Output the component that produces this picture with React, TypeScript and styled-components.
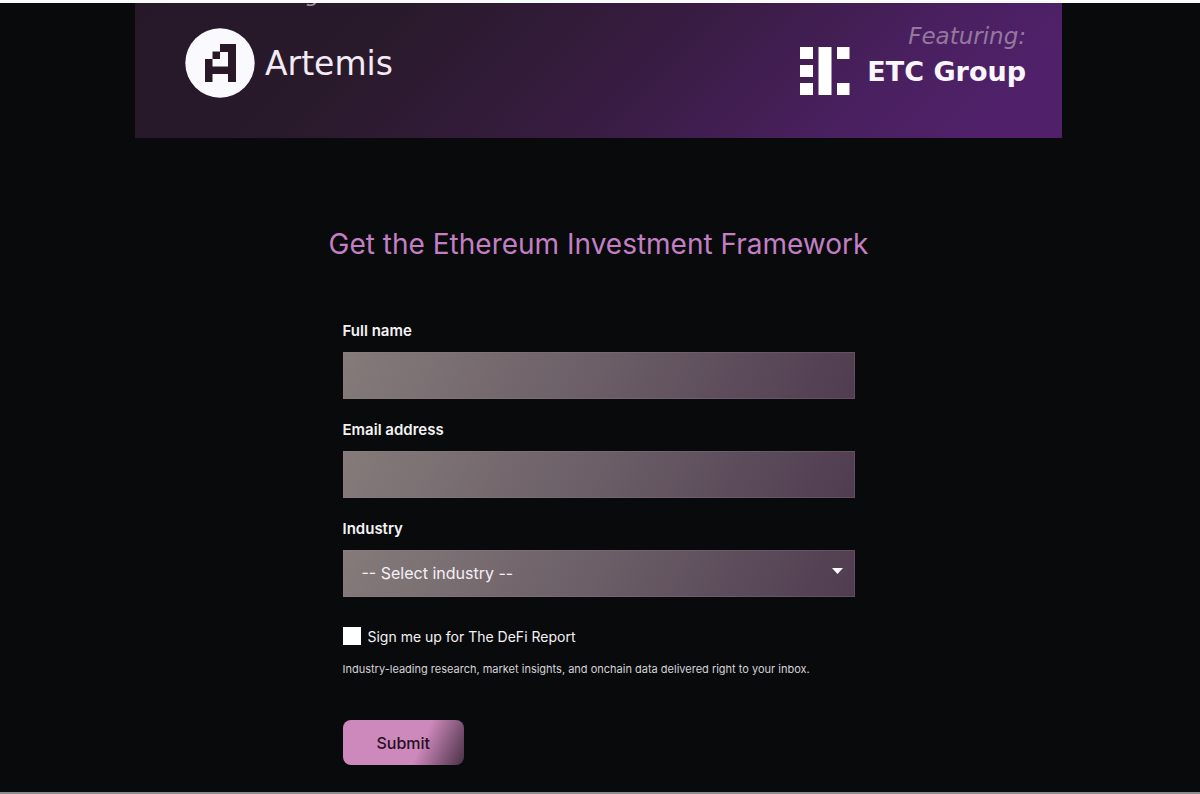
import React from "react";
import styled, { createGlobalStyle } from "styled-components";

const GlobalStyle = createGlobalStyle`
  *, *::before, *::after { box-sizing: border-box; }
  body {
    margin: 0;
    background: #090a0c;
    color: #f4f2f5;
    font-family: Inter, "Liberation Sans", sans-serif;
  }
`;

const Page = styled.div`
  display: flex;
  flex-direction: column;
  min-height: 100vh;
  border-top: 3px solid #f8fbfa;
  border-bottom: 2px solid #8c8c8c;
`;

const Main = styled.main`
  display: flex;
  flex-direction: column;
  align-items: center;
  padding: 0 3px 27px 0;
`;

const Banner = styled.section`
  display: flex;
  flex-direction: column;
  width: 100%;
  max-width: 927px;
  min-height: 135px;
  background: linear-gradient(135deg, #271829 0%, #291a2b 26%, #381c42 54%, #4a2060 78%, #50216a 92%);
`;

const BannerTitle = styled.div`
  display: flex;
  align-items: flex-end;
  height: 3px;
  padding-left: 171px;
  overflow: hidden;
  color: #a394a6;
  font: italic 22px/22px "DejaVu Sans", sans-serif;
`;

const Partners = styled.div`
  display: flex;
  justify-content: space-between;
  align-items: flex-start;
  padding: 14px 36px 0 50px;
`;

const Brand = styled.div`
  display: flex;
  align-items: center;
  gap: 10px;
  padding-top: 8px;
  color: #f3eaf5;
  font: 33px/40px "DejaVu Sans", sans-serif;
`;

const BrandName = styled.span`
  padding-top: 2px;
`;

const Featured = styled.div`
  display: flex;
  align-items: flex-end;
  gap: 17px;
  padding-bottom: 8px;
`;

const FeaturedText = styled.div`
  display: flex;
  flex-direction: column;
  align-items: flex-end;
  padding-bottom: 4px;
`;

const Featuring = styled.span`
  color: #95789f;
  font: italic 23px/32px "DejaVu Sans", sans-serif;
`;

const GroupName = styled.span`
  color: #fbf6fc;
  font: bold 27px/40px "DejaVu Sans", sans-serif;
`;

const Title = styled.h1`
  margin: 86px 0 0;
  color: #c27fc4;
  font-size: 28px;
  font-weight: 400;
  line-height: 40px;
  text-align: center;
`;

const Form = styled.form`
  display: flex;
  flex-direction: column;
  width: 100%;
  max-width: 512px;
  margin-top: 57px;
`;

const Field = styled.div`
  display: flex;
  flex-direction: column;
  gap: 11px;
  margin-bottom: 21px;
`;

const Label = styled.label`
  font-size: 15px;
  font-weight: 600;
  line-height: 20px;
`;

const fieldSurface = `
  width: 100%;
  height: 47px;
  margin: 0;
  padding: 0 18px;
  border: 1px solid rgba(150, 130, 145, 0.25);
  border-radius: 0;
  background: linear-gradient(115deg, #857b7a 0%, #6b5e67 50%, #4f3c50 100%) border-box;
  color: #f5f0f4;
  font: 16px/20px Inter, "Liberation Sans", sans-serif;
`;

const Input = styled.input`
  ${fieldSurface}
`;

const SelectBox = styled.div`
  position: relative;
`;

const Select = styled.select`
  ${fieldSurface}
  display: block;
  padding-bottom: 2px;
  appearance: none;
`;

const Arrow = styled.svg`
  position: absolute;
  top: 18px;
  right: 12px;
  pointer-events: none;
`;

const CheckRow = styled.div`
  display: flex;
  gap: 7px;
  margin-top: 9px;
`;

const Checkbox = styled.input`
  width: 18px;
  height: 18px;
  margin: 0;
  appearance: none;
  background: #fff;
  &:checked { background: #cf8cbd; }
`;

const CheckLabel = styled.label`
  font-size: 14px;
  line-height: 20px;
`;

const Hint = styled.p`
  margin: 14px 0 0;
  color: #d5d3d7;
  font-size: 11px;
  line-height: 16px;
`;

const Submit = styled.button`
  align-self: flex-start;
  height: 45px;
  margin-top: 43px;
  padding: 0 34px;
  border: 0;
  border-radius: 8px;
  background: linear-gradient(115deg, #cd89bb 0%, #cd89bb 63%, #4a3046 100%);
  color: #25101f;
  font: 500 16px/20px Inter, "Liberation Sans", sans-serif;
`;

function ArtemisLogo() {
  return (
    <svg width="70" height="70" viewBox="0 0 70 70" aria-hidden="true">
      <circle cx="35" cy="35" r="34.7" fill="#fafafe" />
      <path
        fill="#281828"
        d="M35 16h16v38h-8v-8H27.500v8H20V31h7.500v7.500H43V24h-8zM27.500 23.500H35V31h-7.500z"
      />
    </svg>
  );
}

function EtcLogo() {
  return (
    <svg width="50" height="50" viewBox="0 0 50 50" aria-hidden="true">
      <path
        fill="#fff"
        d="M0 1h13v12H0zM0 19h13v12H0zM0 37h13v12H0zM18.500 1h13v48h-13zM37 1h12.500v12H37zM37 37h12.500v12H37z"
      />
    </svg>
  );
}

export default function App() {
  return (
    <>
      <GlobalStyle />
      <Page>
        <Main>
          <Banner>
            <BannerTitle aria-hidden="true">g</BannerTitle>
            <Partners>
              <Brand>
                <ArtemisLogo />
                <BrandName>Artemis</BrandName>
              </Brand>
              <Featured>
                <EtcLogo />
                <FeaturedText>
                  <Featuring>Featuring:</Featuring>
                  <GroupName>ETC Group</GroupName>
                </FeaturedText>
              </Featured>
            </Partners>
          </Banner>
          <Title>Get the Ethereum Investment Framework</Title>
          <Form onSubmit={(e: React.FormEvent) => e.preventDefault()}>
            <Field>
              <Label htmlFor="name">Full name</Label>
              <Input id="name" type="text" />
            </Field>
            <Field>
              <Label htmlFor="email">Email address</Label>
              <Input id="email" type="email" />
            </Field>
            <Field>
              <Label htmlFor="industry">Industry</Label>
              <SelectBox>
                <Select id="industry" defaultValue="">
                  <option value="">-- Select industry --</option>
                </Select>
                <Arrow width="11" height="6" viewBox="0 0 11 6" aria-hidden="true">
                  <path d="M0 0h11L5.500 6z" fill="#fff" />
                </Arrow>
              </SelectBox>
            </Field>
            <CheckRow>
              <Checkbox id="signup" type="checkbox" />
              <CheckLabel htmlFor="signup">Sign me up for The DeFi Report</CheckLabel>
            </CheckRow>
            <Hint>
              Industry-leading research, market insights, and onchain data delivered right to your inbox.
            </Hint>
            <Submit type="submit">Submit</Submit>
          </Form>
        </Main>
      </Page>
    </>
  );
}
